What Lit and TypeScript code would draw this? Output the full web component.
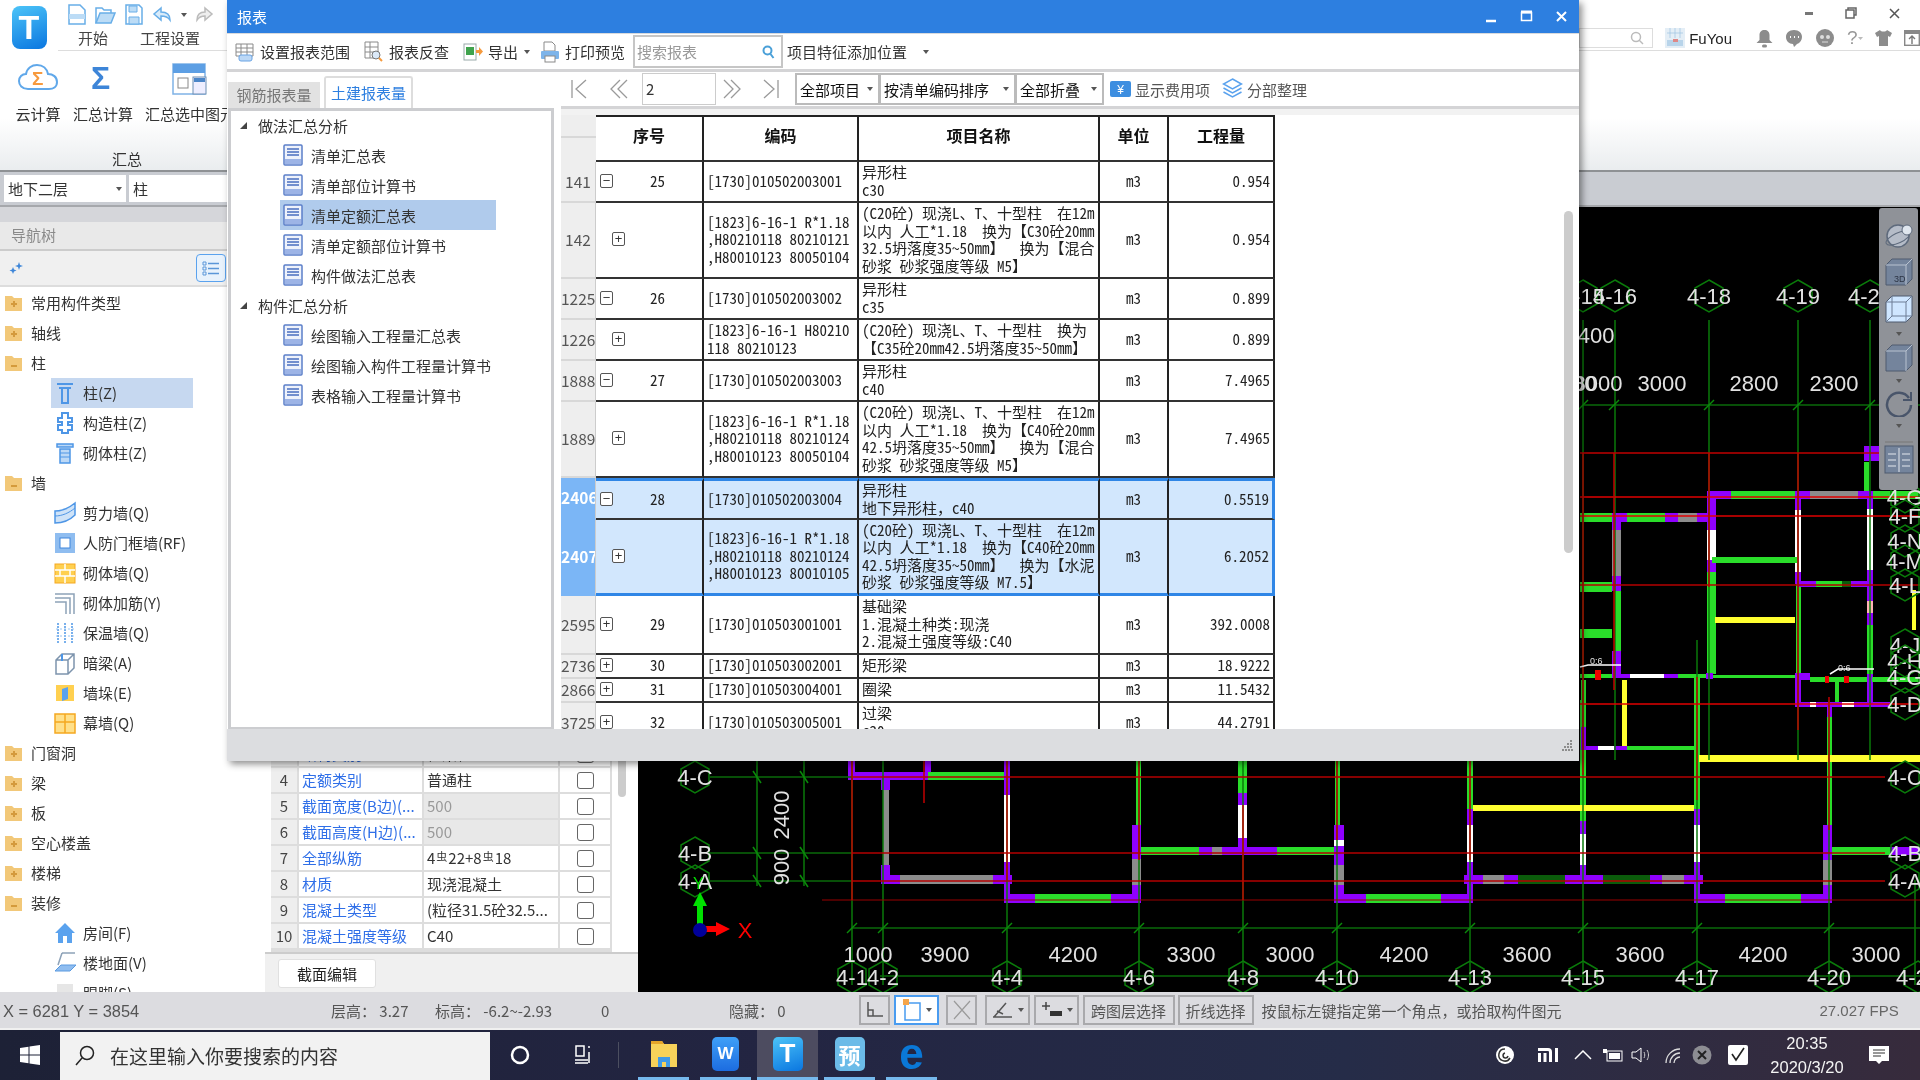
import { LitElement, html, css, svg } from "lit";
import { customElement } from "lit/decorators.js";

// ---- icons -------------------------------------------------------------
const docIcon = html`<svg class="doc" width="20" height="22" viewBox="0 0 20 22">
  <rect x="1" y="1" width="18" height="20" rx="1" fill="#eef2fb" stroke="#5b7fc9" stroke-width="1.5" />
  <rect x="2" y="15" width="16" height="5" fill="#9db4e6" />
  <path d="M4 5h12M4 8h12M4 11h12" stroke="#4a6fc0" stroke-width="1.3" />
</svg>`;

const folder = (open: boolean) => html`<svg width="22" height="20" viewBox="0 0 22 20">
  <path d="M2 3h7l2 2h8v13H2z" fill="#f2c879" />
  ${open ? html`<path d="M1 8h20l-3 10H3z" fill="#f9dca2" />` : ""}
  <path d="${open ? "M8 13h6" : "M8 11h6M11 8v6"}" stroke="#d49a3c" stroke-width="2" />
</svg>`;

const navIcons: Record<string, unknown> = {
  column: html`<svg width="22" height="24" viewBox="0 0 22 24"><path d="M3 3h16M5 7h12M8 7v15h6V7" fill="none" stroke="#4e96e6" stroke-width="2" /></svg>`,
  gz: html`<svg width="22" height="24" viewBox="0 0 22 24"><path d="M8 2h6v5h4v4h-4v3h4v5h-4v3H8v-3H4v-5h4v-3H4V7h4z" fill="#fff" stroke="#4e96e6" stroke-width="2" /></svg>`,
  brick: html`<svg width="22" height="24" viewBox="0 0 22 24"><path d="M3 3h16v3H3zM6 8h10v14H6z" fill="#bcd8f6" stroke="#4e96e6" stroke-width="1.5" /><path d="M6 12h10M6 16h10" stroke="#4e96e6" /></svg>`,
  shear: html`<svg width="22" height="24" viewBox="0 0 22 24"><path d="M1 10c7 0 14-3 20-8v12c-6 6-13 8-20 8z" fill="#cfe3f8" stroke="#4e96e6" stroke-width="1.5" /><path d="M1 15c7 0 14-3 20-8" fill="none" stroke="#4e96e6" /></svg>`,
  frame: html`<svg width="22" height="24" viewBox="0 0 22 24"><rect x="1" y="2" width="20" height="20" fill="#8fbdf0" /><rect x="6" y="7" width="10" height="10" fill="#fff" stroke="#3f86dc" /></svg>`,
  masonry: html`<svg width="22" height="24" viewBox="0 0 22 24"><rect x="1" y="3" width="20" height="19" fill="#ffd050" stroke="#f5a820" /><path d="M1 9h20M1 15h20M11 3v6M6 9v6M16 9v6M11 15v7" stroke="#fff" stroke-width="1.5" /></svg>`,
  rebar: html`<svg width="22" height="24" viewBox="0 0 22 24"><path d="M1 3h19v20M1 7h15v16M1 11h11v12" fill="none" stroke="#8da2b8" stroke-width="1.5" /></svg>`,
  insul: html`<svg width="22" height="24" viewBox="0 0 22 24"><path d="M4 2v20M11 2v20M18 2v20" stroke="#4e96e6" stroke-width="1.5" stroke-dasharray="2 1" /><path d="M2 8h18M2 15h18" stroke="#9cc6f2" stroke-dasharray="2 2" /></svg>`,
  beam: html`<svg width="22" height="24" viewBox="0 0 22 24"><path d="M2 9l6-6h12v14l-6 6H2zM2 9h12v14M14 9l6-6" fill="#fff" stroke="#7d94ad" stroke-width="1.5" /><path d="M8 3v7" stroke="#4e96e6" stroke-width="2" /></svg>`,
  pier: html`<svg width="22" height="24" viewBox="0 0 22 24"><rect x="2" y="4" width="18" height="16" fill="#ffd050" /><path d="M8 8l6-2v12l-6 2z" fill="#5aa2ee" /></svg>`,
  curtain: html`<svg width="22" height="24" viewBox="0 0 22 24"><rect x="1" y="3" width="20" height="19" fill="#ffe08a" stroke="#f5a820" stroke-width="1.5" /><path d="M1 11h20M11 3v19" stroke="#f5a820" stroke-width="1.5" /></svg>`,
  room: html`<svg width="22" height="24" viewBox="0 0 22 24"><path d="M11 2L1 12h3v10h5v-7h4v7h5V12h3z" fill="#5aa2ee" /></svg>`,
  floor: html`<svg width="22" height="24" viewBox="0 0 22 24"><path d="M8 2h13M8 2L4 14" fill="none" stroke="#8da2b8" stroke-width="1.5" /><path d="M1 20l6-6h15l-6 6z" fill="#8fbdf0" stroke="#5a9ae0" /></svg>`,
  skirt: html`<svg width="22" height="24" viewBox="0 0 22 24"><path d="M3 3h16v19H3z" fill="#e6e6e6" /></svg>`,
};

const caret = html`<span class="caret"></span>`;

// ---- data --------------------------------------------------------------
type Nav = { t: string; i: string; sel?: boolean };
const navItems: Nav[] = [
  { t: "常用构件类型", i: "closed" },
  { t: "轴线", i: "closed" },
  { t: "柱", i: "open" },
  { t: "柱(Z)", i: "column", sel: true },
  { t: "构造柱(Z)", i: "gz" },
  { t: "砌体柱(Z)", i: "brick" },
  { t: "墙", i: "open" },
  { t: "剪力墙(Q)", i: "shear" },
  { t: "人防门框墙(RF)", i: "frame" },
  { t: "砌体墙(Q)", i: "masonry" },
  { t: "砌体加筋(Y)", i: "rebar" },
  { t: "保温墙(Q)", i: "insul" },
  { t: "暗梁(A)", i: "beam" },
  { t: "墙垛(E)", i: "pier" },
  { t: "幕墙(Q)", i: "curtain" },
  { t: "门窗洞", i: "closed" },
  { t: "梁", i: "closed" },
  { t: "板", i: "closed" },
  { t: "空心楼盖", i: "closed" },
  { t: "楼梯", i: "closed" },
  { t: "装修", i: "open" },
  { t: "房间(F)", i: "room" },
  { t: "楼地面(V)", i: "floor" },
  { t: "踢脚(S)", i: "skirt" },
];

const propRows = [
  { n: 3, k: "结构类别", v: "框架柱" },
  { n: 4, k: "定额类别", v: "普通柱" },
  { n: 5, k: "截面宽度(B边)(...", v: "500", off: true },
  { n: 6, k: "截面高度(H边)(...", v: "500", off: true },
  { n: 7, k: "全部纵筋", v: "rebar" },
  { n: 8, k: "材质", v: "现浇混凝土" },
  { n: 9, k: "混凝土类型", v: "(粒径31.5砼32.5..." },
  { n: 10, k: "混凝土强度等级", v: "C40" },
];

const reportTree = [
  { t: "做法汇总分析", group: true },
  { t: "清单汇总表" },
  { t: "清单部位计算书" },
  { t: "清单定额汇总表", sel: true },
  { t: "清单定额部位计算书" },
  { t: "构件做法汇总表" },
  { t: "构件汇总分析", group: true },
  { t: "绘图输入工程量汇总表" },
  { t: "绘图输入构件工程量计算书" },
  { t: "表格输入工程量计算书" },
];

type Row = { id: number; h: number; sign: string; seq?: number; code: string; name: string; qty: string; sel?: boolean };
const L1 = "(C20砼) 现浇L、T、十型柱  在12m\n以内 人工*1.18  换为【";
const rows: Row[] = [
  { id: 141, h: 41, sign: "-", seq: 25, code: "[1730]010502003001", name: "异形柱\nc30", qty: "0.954" },
  { id: 142, h: 76, sign: "+", code: "[1823]6-16-1 R*1.18\n,H80210118 80210121\n,H80010123 80050104", name: L1 + "C30砼20mm\n32.5坍落度35~50mm】  换为【混合\n砂浆 砂浆强度等级 M5】", qty: "0.954" },
  { id: 1225, h: 41, sign: "-", seq: 26, code: "[1730]010502003002", name: "异形柱\nc35", qty: "0.899" },
  { id: 1226, h: 41, sign: "+", code: "[1823]6-16-1 H80210\n118 80210123", name: "(C20砼) 现浇L、T、十型柱  换为\n【C35砼20mm42.5坍落度35~50mm】", qty: "0.899" },
  { id: 1888, h: 41, sign: "-", seq: 27, code: "[1730]010502003003", name: "异形柱\nc40", qty: "7.4965" },
  { id: 1889, h: 76, sign: "+", code: "[1823]6-16-1 R*1.18\n,H80210118 80210124\n,H80010123 80050104", name: L1 + "C40砼20mm\n42.5坍落度35~50mm】  换为【混合\n砂浆 砂浆强度等级 M5】", qty: "7.4965" },
  { id: 2406, h: 42, sign: "-", seq: 28, sel: true, code: "[1730]010502003004", name: "异形柱\n地下异形柱\uFF0Cc40", qty: "0.5519" },
  { id: 2407, h: 76, sign: "+", sel: true, code: "[1823]6-16-1 R*1.18\n,H80210118 80210124\n,H80010123 80010105", name: L1 + "C40砼20mm\n42.5坍落度35~50mm】  换为【水泥\n砂浆 砂浆强度等级 M7.5】", qty: "6.2052" },
  { id: 2595, h: 59, sign: "+", seq: 29, code: "[1730]010503001001", name: "基础梁\n1.混凝土种类:现浇\n2.混凝土强度等级:C40", qty: "392.0008" },
  { id: 2736, h: 24, sign: "+", seq: 30, code: "[1730]010503002001", name: "矩形梁", qty: "18.9222" },
  { id: 2866, h: 24, sign: "+", seq: 31, code: "[1730]010503004001", name: "圈梁", qty: "11.5432" },
  { id: 3725, h: 41, sign: "+", seq: 32, code: "[1730]010503005001", name: "过梁\nc20", qty: "44.2791" },
];

// ---- canvas data: [x1, x2, y1, y2, colour] -----------------------------
const G = "#2add2a", P = "#8f00ff", A = "#8c8c8c", W = "#fff", Y = "#ffff30", D = "#0b5c0b", R = "#f00000", K = "#ffb4b4";
type Seg = [number, number, number, number, string];
const walls: Seg[] = [
  // bottom zone, left block
  [848, 928, 772, 780, P], [928, 1007, 772, 780, G], [848, 855, 755, 780, P], [925, 931, 755, 772, P],
  [881, 890, 780, 790, P], [883, 889, 790, 865, A], [881, 890, 865, 884, P], [890, 900, 875, 884, P],
  [900, 993, 875, 884, A], [993, 1012, 875, 884, P], [1004, 1010, 755, 795, P], [1004, 1010, 795, 862, W],
  [1004, 1010, 862, 903, P], [1004, 1035, 894, 903, P], [1035, 1111, 894, 903, G], [1111, 1141, 894, 903, P],
  [1132, 1141, 885, 903, P], [1132, 1141, 859, 885, A], [1132, 1141, 825, 859, P], [1136, 1141, 755, 825, G],
  [1141, 1199, 847, 855, G], [1199, 1212, 847, 855, P], [1212, 1222, 847, 855, A], [1222, 1277, 847, 855, P],
  [1277, 1337, 847, 855, G], [1238, 1247, 755, 793, G], [1238, 1247, 793, 805, P], [1238, 1247, 805, 838, W],
  [1238, 1247, 838, 850, P],
  [1334, 1344, 825, 840, P], [1334, 1344, 840, 846, W], [1334, 1344, 846, 865, P], [1334, 1344, 865, 885, A],
  [1334, 1344, 885, 903, P], [1335, 1340, 755, 825, G], [1334, 1366, 894, 903, P], [1366, 1441, 894, 903, G],
  [1441, 1473, 894, 903, P], [1467, 1473, 880, 900, P], [1467, 1473, 862, 880, P], [1467, 1473, 825, 862, W],
  [1467, 1473, 809, 825, P], [1467, 1473, 755, 809, G], [1464, 1483, 875, 884, P], [1483, 1504, 875, 884, A],
  [1504, 1518, 875, 884, P], [1518, 1565, 875, 884, D], [1565, 1603, 875, 884, P], [1603, 1650, 875, 884, D],
  [1650, 1662, 875, 884, P], [1662, 1684, 875, 884, A], [1684, 1703, 875, 884, P], [1580, 1586, 700, 821, G],
  [1580, 1586, 821, 834, P], [1580, 1586, 834, 865, W], [1580, 1586, 865, 880, P], [1694, 1700, 678, 809, G],
  [1694, 1700, 809, 825, P], [1694, 1700, 825, 862, W], [1694, 1700, 862, 900, P], [1694, 1725, 894, 903, P],
  [1725, 1801, 894, 903, G], [1801, 1832, 894, 903, P], [1827, 1832, 717, 825, G], [1823, 1832, 825, 860, P],
  [1823, 1832, 860, 885, A], [1823, 1832, 885, 900, P], [1832, 1890, 847, 855, G], [1890, 1920, 847, 855, P],
  [1473, 1694, 805, 811, Y], [1699, 1920, 755, 762, Y],
  // top right zone
  [1580, 1612, 513, 522, G], [1612, 1627, 513, 522, P], [1627, 1665, 513, 522, G], [1665, 1678, 513, 522, P],
  [1678, 1697, 513, 522, A], [1697, 1707, 513, 522, P], [1612, 1621, 522, 530, P], [1612, 1621, 530, 576, A],
  [1612, 1621, 576, 591, P], [1615, 1621, 591, 651, G], [1612, 1621, 651, 678, P],
  [1707, 1716, 491, 530, P], [1707, 1716, 530, 560, W], [1707, 1716, 560, 572, P], [1707, 1716, 572, 674, G],
  [1707, 1731, 491, 499, P], [1731, 1795, 491, 499, G], [1795, 1810, 491, 499, P], [1810, 1858, 491, 499, A],
  [1858, 1873, 491, 499, P], [1795, 1801, 495, 510, P], [1795, 1801, 510, 572, W], [1795, 1801, 572, 584, P],
  [1796, 1801, 584, 674, G], [1867, 1873, 495, 509, P], [1867, 1873, 509, 570, W], [1867, 1873, 570, 601, P],
  [1867, 1873, 601, 613, K], [1867, 1873, 613, 625, P], [1867, 1873, 625, 674, G], [1867, 1873, 674, 705, P],
  [1797, 1816, 581, 587, P], [1816, 1842, 581, 587, G], [1842, 1851, 581, 587, D], [1851, 1870, 581, 587, P],
  [1864, 1869, 462, 491, G], [1864, 1879, 446, 461, P], [1873, 1920, 491, 499, G],
  [1580, 1612, 582, 592, G], [1580, 1612, 629, 638, G], [1712, 1797, 557, 563, G], [1715, 1795, 617, 623, Y],
  [1912, 1916, 590, 630, Y], [1580, 1612, 674, 678, G], [1595, 1601, 670, 680, R], [1612, 1630, 674, 678, P],
  [1630, 1664, 674, 678, W], [1664, 1678, 674, 678, P], [1678, 1706, 674, 678, G], [1706, 1713, 673, 679, P],
  [1713, 1795, 675, 678, G], [1795, 1810, 673, 680, P], [1810, 1920, 677, 682, G], [1825, 1829, 676, 683, R],
  [1844, 1849, 676, 683, R], [1867, 1872, 674, 705, P], [1795, 1810, 702, 707, P], [1810, 1816, 702, 707, W],
  [1816, 1842, 702, 707, P], [1842, 1854, 702, 707, W], [1854, 1890, 702, 707, P], [1622, 1627, 680, 746, Y],
  [1581, 1586, 680, 727, G], [1581, 1586, 727, 750, P], [1583, 1598, 746, 750, P], [1598, 1614, 746, 750, W],
  [1614, 1627, 746, 750, P], [1627, 1694, 746, 750, G], [1827, 1832, 707, 717, P], [1835, 1839, 682, 702, G],
  [1795, 1801, 673, 704, P],
];

// green vertical axes [x, y1, y2]
const greenV = [
  [852, 760, 985], [883, 760, 985], [1007, 760, 985], [1139, 760, 985], [1243, 760, 985], [1337, 760, 985],
  [1470, 760, 985], [1583, 320, 985], [1615, 320, 760], [1709, 320, 760], [1798, 320, 760], [1870, 320, 760],
  [1697, 640, 985], [1829, 700, 985], [1915, 880, 985], [757, 760, 886], [804, 760, 886],
];
// horizontal axes, [x1, x2, y, colour, width]
const axisH: [number, number, number, string, number][] = [
  [710, 852, 777, "#0a6a0a", 1.5], [710, 852, 853, "#0a6a0a", 1.5], [710, 852, 881, "#0a6a0a", 1.5],
  [852, 1920, 928, "#0a6a0a", 1.5], [880, 1920, 976, "#0a6a0a", 1.5], [1583, 1920, 405, "#0a6a0a", 1.5],
  [852, 1885, 777, "#b40000", 1.5], [852, 1885, 853, "#b40000", 1.5], [852, 1885, 881, "#b40000", 1.5],
  [822, 1920, 900, "#9a0000", 1], [1580, 1880, 453, "#c00000", 1.5], [1580, 1920, 497, "#e00000", 1.5],
  [1580, 1920, 516, "#e00000", 1.5], [1580, 1920, 585, "#b40000", 1.5], [1580, 1920, 704, "#e00000", 1.5],
];
const redV = [
  [852, 760, 900], [924, 760, 803], [1243, 805, 900], [1583, 453, 775], [1614, 453, 690], [1709, 453, 587],
  [1798, 453, 730], [1829, 697, 830], [1697, 677, 800], [1007, 760, 880], [1139, 760, 860], [1470, 760, 860],
  [1337, 760, 840],
];
const bubbles: [string, number, number][] = [
  ["4-15", 1583, 296], ["4-16", 1615, 296], ["4-18", 1709, 296], ["4-19", 1798, 296], ["4-20", 1870, 296],
  ["4-C", 695, 777], ["4-B", 695, 853], ["4-A", 695, 881],
  ["4-1", 852, 977], ["4-2", 883, 977], ["4-4", 1007, 977], ["4-6", 1139, 977], ["4-8", 1243, 977],
  ["4-10", 1337, 977], ["4-13", 1470, 977], ["4-15", 1583, 977], ["4-17", 1697, 977], ["4-20", 1829, 977],
  ["4-22", 1918, 977], ["4-C", 1905, 777], ["4-B", 1905, 853], ["4-A", 1905, 881], ["4-G", 1905, 497],
  ["4-F", 1905, 516], ["4-N", 1905, 541], ["4-M", 1905, 561], ["4-L", 1905, 585], ["4-J", 1905, 645],
  ["4-H", 1905, 661], ["4-G", 1905, 677], ["4-D", 1905, 704],
];
const dims: [string, number, number][] = [
  ["2400", 1590, 343], ["1000", 1572, 391], ["3000", 1598, 391], ["3000", 1662, 391], ["2800", 1754, 391],
  ["2300", 1834, 391], ["1000", 868, 962], ["3900", 945, 962], ["4200", 1073, 962], ["3300", 1191, 962],
  ["3000", 1290, 962], ["4200", 1404, 962], ["3600", 1527, 962], ["3600", 1640, 962], ["4200", 1763, 962],
  ["3000", 1876, 962],
];
const hexPts = "0,-16 14,-8 14,8 0,16 -14,8 -14,-8";

@customElement("app-root")
export class AppRoot extends LitElement {
  static styles = css`
    :host {
      display: block;
      position: relative;
      width: 1920px;
      height: 1080px;
      overflow: hidden;
      font-family: "Noto Sans CJK SC", "Liberation Sans", sans-serif;
      font-size: 15px;
      color: #333;
      background: #fff;
      filter: blur(0.5px);
    }
    svg { display: block; flex: none; }
    .caret {
      display: inline-block;
      width: 0;
      height: 0;
      border: 3.5px solid transparent;
      border-top: 4px solid #555;
      border-bottom: 0;
      flex: none;
    }

    /* ribbon */
    .ribbon {
      height: 172px;
      box-sizing: border-box;
      border-bottom: 2px solid #8e9194;
      background: linear-gradient(#fff 0, #fff 118px, #e9ecee 172px);
      overflow: hidden;
    }
    .rtop { display: flex; height: 51px; }
    .logo-box {
      width: 58px;
      display: flex;
      align-items: center;
      justify-content: center;
      padding-left: 0;
    }
    .logo {
      width: 35px;
      height: 43px;
      margin-top: 4px;
      border-radius: 8px;
      background: linear-gradient(160deg, #4cc4f8, #0a76e0);
      color: #fff;
      font: bold 34px/43px "Liberation Sans", sans-serif;
      text-align: center;
    }
    .rtop-mid { flex: 1; border-bottom: 1px solid #ddd; display: flex; flex-direction: column; }
    .qat { display: flex; gap: 9px; align-items: center; height: 29px; padding-left: 10px; }
    .rtabs { display: flex; gap: 32px; padding-left: 20px; font-size: 15px; line-height: 18px; color: #444; }
    .rright { width: 341px; border-bottom: 1px solid #ddd; display: flex; flex-direction: column; }
    .winbtns { display: flex; height: 26px; align-items: center; color: #555; padding-left: 226px; gap: 32px; }
    .ruser { display: flex; align-items: center; height: 24px; }
    .rsearch {
      width: 78px;
      height: 20px;
      border: 1px solid #ddd;
      box-sizing: border-box;
      display: flex;
      justify-content: flex-end;
      align-items: center;
      padding-right: 8px;
    }
    .rname { font: 15px "Liberation Sans", sans-serif; color: #222; margin: 0 24px 0 4px; }
    .ruser svg.ava { margin-left: 12px; }
    .ricons { display: flex; gap: 12px; align-items: center; }
    .rbig { display: flex; height: 62px; padding-top: 12px; }
    .rbig-item { display: flex; flex-direction: column; align-items: center; height: 61px; justify-content: space-between; white-space: nowrap; }
    .rbig-1 { width: 76px; }
    .rbig-2 { width: 54px; }
    .rbig-3 { width: 120px; }
    .rgroup { width: 254px; text-align: center; margin-top: 24px; line-height: 20px; }

    /* combo band */
    .band {
      height: 35px;
      box-sizing: border-box;
      background: #c9ccd2;
      display: flex;
      gap: 3px;
      padding: 3px 0 0 4px;
      border-bottom: 2px solid #a6a8ac;
    }
    .combo {
      height: 27px;
      background: #fff;
      box-sizing: border-box;
      padding: 0 4px;
      display: flex;
      align-items: center;
      justify-content: space-between;
      line-height: 27px;
    }
    .combo-a { width: 122px; }
    .combo-b { width: 130px; }

    /* workspace */
    .work { display: flex; height: 785px; }
    .side { width: 265px; flex: none; overflow: hidden; display: flex; flex-direction: column; background: #fff; }
    .side-gap { height: 15px; background: #d5d6da; flex: none; }
    .side-head {
      height: 27px;
      background: #e9e9e9;
      border-bottom: 2px solid #ccc;
      color: #8a8a8a;
      padding-left: 11px;
      line-height: 25px;
      flex: none;
    }
    .side-tools {
      height: 34px;
      background: #f0f0f0;
      border-bottom: 2px solid #ddd;
      display: flex;
      align-items: center;
      justify-content: space-between;
      padding: 0 39px 0 9px;
      flex: none;
    }
    .listbtn {
      width: 28px;
      height: 26px;
      border: 1px solid #5aa2ee;
      border-radius: 4px;
      background: #e8f2fc;
      display: flex;
      align-items: center;
      justify-content: center;
    }
    .nav { flex: 1; padding-top: 1px; overflow: hidden; }
    .nrow { height: 30px; display: flex; align-items: center; gap: 6px; padding-left: 3px; line-height: 30px; white-space: nowrap; }
    .nrow.child { padding-left: 54px; gap: 7px; }
    .nrow.nsel { background: linear-gradient(90deg, transparent 51px, #c6d8f0 51px, #c6d8f0 193px, transparent 193px); }

    /* properties */
    .props { width: 373px; flex: none; display: flex; flex-direction: column; justify-content: flex-end; background: #f0f0f0; overflow: hidden; }
    .pbody { display: flex; background: #fff; border-bottom: 2px solid #ccc; padding-left: 6px; height: 212px; box-sizing: border-box; overflow: hidden; }
    .ptable {
      width: 341px;
      flex: none;
      display: grid;
      grid-template-columns: 28px 125px 136px 52px;
      grid-auto-rows: 26px;
      background: #ddd;
      align-content: start;
    }
    .pc { background: #fff; border: 1px solid #ddd; border-width: 0 2px 2px 0; box-sizing: border-box; padding-left: 3px; line-height: 24px; white-space: nowrap; overflow: hidden; }
    .pn { background: #eee; text-align: center; padding: 0; color: #444; }
    .pk { color: #2f6fe8; }
    .pv.off { background: #e8e8e8; color: #999; }
    .rebar-s { font-size: 11px; position: relative; top: -3px; padding: 0 1px; }
    .pchk { display: flex; align-items: center; justify-content: center; padding: 0; }
    .pchk i { display: block; width: 17px; height: 17px; border: 1px solid #666; border-radius: 3px; box-sizing: border-box; background: #fff; }
    .pscroll { width: 8px; height: 55px; margin-left: 6px; background: #ccc; border-radius: 4px; }
    .pfoot { height: 38px; flex: none; padding: 5px 0 0 13px; box-sizing: border-box; }
    .pbtn {
      width: 98px;
      height: 29px;
      background: #fff;
      border: 1px solid #e0e0e0;
      border-radius: 3px;
      text-align: center;
      line-height: 27px;
      box-sizing: border-box;
      color: #222;
    }

    /* canvas */
    .view { position: relative; flex: 1; background: #000; overflow: hidden; }
    .view text { font-family: "Liberation Sans", sans-serif; fill: #e2e2e2; }
    .strip {
      position: absolute;
      left: 1241px;
      top: 1px;
      width: 39px;
      height: 282px;
      background: #8f9298;
      border-radius: 3px;
      display: flex;
      flex-direction: column;
      align-items: center;
      padding-top: 13px;
      box-sizing: border-box;
    }
    .m6 { margin-top: 6px; }
    .m7 { margin-top: 7px; }
    .m8 { margin-top: 8px; }
    .m12 { margin-top: 12px; }

    /* status */
    .status {
      height: 36px;
      background: #dcdce0;
      display: grid;
      grid-template-columns: 331px 104px 166px 128px 130px 35px 52px 39px 49px 48.5px 95px 84px 558px 1fr;
      align-items: center;
      padding: 0;
      color: #555;
      white-space: pre;
      border-bottom: 2px solid #f0f0f0;
      box-sizing: content-box;
    }
    .sfirst { padding: 3px 0 0 3px; font: 16.4px "Liberation Sans", "Noto Sans CJK SC", sans-serif; }
    .sbtn {
      height: 30px;
      border: 2px solid #a9a9ac;
      box-sizing: border-box;
      display: flex;
      align-items: center;
      justify-content: center;
      gap: 4px;
      background: #dcdce0;
    }
    .sbtn.on { background: #fff; border: 2px solid #4a9cf0; }
    .sw31 { width: 31px; }
    .sw45 { width: 45px; }
    .sw92 { width: 92px; }
    .sw76 { width: 76px; }
    .sfps { font: 15px "Liberation Sans", sans-serif; color: #666; }

    /* taskbar */
    .task {
      height: 50px;
      background: linear-gradient(90deg, #1d2136 0, #232542 40%, #252c48 70%, #372b3c 100%);
      display: grid;
      grid-template-columns: 60px 430px 60px 70px 1fr;
      align-items: center;
      color: #fff;
      position: relative;
    }
    .tstart { display: flex; justify-content: center; }
    .tsearch {
      background: #f2f2f2;
      height: 48px;
      margin-top: 1px;
      display: flex;
      align-items: center;
      color: #333;
      font-size: 19px;
      gap: 15px;
      padding-left: 15px;
    }
    .tcirc { display: flex; justify-content: center; padding-left: 0; }
    .tview { display: flex; justify-content: center; border-right: 1px solid #4c4f60; height: 26px; align-items: center; margin-right: 0; width: 68px; }
    .tright { display: flex; align-items: center; height: 50px; }
    .tapps { display: flex; height: 50px; padding-left: 18px; gap: 11px; }
    .tapp { width: 51px; height: 50px; box-sizing: border-box; border-bottom: 3px solid #76b9ed; display: flex; align-items: center; justify-content: center; }
    .tapp.active { width: 61px; margin: 0 -5px; background: #4d4c60; }
    .tbadge {
      width: 30px;
      height: 34px;
      border-radius: 5px;
      display: flex;
      align-items: center;
      justify-content: center;
      font: bold 22px "Noto Sans CJK SC", sans-serif;
      color: #fff;
    }
    .b-w { background: linear-gradient(#3fa0f8, #1c6ce0); width: 27px; font: bold 17px "Liberation Sans", sans-serif; }
    .b-t { background: linear-gradient(160deg, #4cc4f8, #0a76e0); font-family: "Liberation Sans", sans-serif; font-size: 26px; }
    .b-y { background: #6bbbe8; font-size: 22px; }
    .b-e { background: none; color: #0a78d7; font: bold 44px/34px "Liberation Sans", sans-serif; }
    .tray { margin-left: auto; display: grid; grid-template-columns: 44px 42px 28px 32px 24px 42px 14px 58px 80px 64px; align-items: center; justify-items: center; height: 50px; padding-right: 9px; }
    .clock { text-align: center; font-size: 16.5px; line-height: 24px; white-space: nowrap; color: #f4f4f4; font-family: "Liberation Sans", sans-serif; }

    /* report dialog */
    .dlg {
      position: absolute;
      left: 227px;
      top: 0;
      width: 1352px;
      height: 761px;
      background: #fff;
      box-shadow: 3px 3px 7px rgba(0, 0, 0, 0.45);
      display: flex;
      flex-direction: column;
    }
    .dtitle {
      height: 33px;
      background: #2d7fe0;
      flex: none;
      color: #fff;
      display: flex;
      align-items: center;
      padding-left: 10px;
      line-height: 33px;
    }
    .dctl { margin-left: auto; display: flex; gap: 20px; padding-right: 10px; }
    .dbar {
      height: 39px;
      flex: none;
      box-sizing: border-box;
      border-bottom: 3px solid #d4d4d6;
      border-top: 1px solid #d8dadd;
      display: flex;
      align-items: center;
      gap: 14px;
      padding-left: 8px;
      white-space: nowrap;
      color: #333;
    }
    .tool { display: flex; align-items: center; gap: 5px; }
    .tool.cut { margin-right: -4px; }
    .tool.cut .caret { margin-left: 1px; }
    .dsearch {
      width: 150px;
      height: 33px;
      box-sizing: border-box;
      border: 2px solid #c6c6c6;
      margin-left: -6px;
      display: flex;
      align-items: center;
      justify-content: space-between;
      padding: 0 6px 0 2px;
      color: #999;
    }
    .dprop { margin-left: -10px; gap: 0; }
    .dprop .caret { margin-left: 16px; }
    .dbody { flex: 1; display: flex; min-height: 0; }
    .dleft { width: 334px; flex: none; display: flex; flex-direction: column; }
    .tabs { height: 34px; flex: none; display: flex; align-items: flex-end; padding-left: 1px; gap: 4px; margin-top: 2px; }
    .tab { width: 92px; height: 26px; background: #e2e2e2; color: #777; text-align: center; line-height: 26px; }
    .tab.on { width: 89px; height: 32px; line-height: 30px; background: #fff; color: #2d7fe0; border: 2px solid #ddd; border-bottom: 0; box-sizing: border-box; border-radius: 3px 3px 0 0; }
    .tree {
      flex: 1;
      width: 326px;
      margin-left: 1px;
      background: #fff;
      border: 3px solid #cccdd0;
      border-bottom-width: 2px;
      box-sizing: border-box;
      overflow: hidden;
    }
    .tree-rows { margin-top: -1px; }
    .trow { height: 30px; display: flex; align-items: center; white-space: nowrap; }
    .trow.group { padding-left: 9px; gap: 11px; }
    .tri { width: 0; height: 0; border-left: 7px solid transparent; border-bottom: 7px solid #444; }
    .titem { margin-left: 49px; width: 216px; height: 30px; display: flex; align-items: center; gap: 8px; padding-left: 3px; box-sizing: border-box; }
    .titem.sel { background: #b0cbec; }
    .dright { flex: 1; min-width: 0; display: flex; flex-direction: column; }
    .nbar {
      height: 37px;
      flex: none;
      box-sizing: border-box;
      border-bottom: 3px solid #d4d4d6;
      display: flex;
      align-items: center;
      color: #333;
      white-space: nowrap;
    }
    .npg { width: 18px; height: 22px; margin-left: 9px; color: #9a9a9a; }
    .npg svg { width: 18px; height: 22px; }
    .npg.two { margin-left: 22px; }
    .npg.three { margin-left: 7px; }
    .npg.four { margin-left: 21px; }
    .ninput { width: 74px; height: 32px; box-sizing: border-box; border: 1px solid #ccc; margin-left: 14px; line-height: 30px; padding-left: 3px; }
    .ncombo { height: 32px; box-sizing: border-box; border: 2px solid #bbb; display: flex; align-items: center; justify-content: space-between; padding: 0 5px 0 3px; color: #111; }
    .nc1 { width: 85px; margin-left: 15px; }
    .nc2 { width: 137px; margin-left: -1px; }
    .nc3 { width: 89px; margin-left: -1px; }
    .nplain { color: #555; display: flex; align-items: center; gap: 4px; }
    .np1 { margin-left: 6px; }
    .np2 { margin-left: 12px; }

    .gridwrap { flex: 1; min-height: 0; overflow: hidden; position: relative; border-top: 6px solid #f2f2f2; }
    table { border-collapse: separate; border-spacing: 0; table-layout: fixed; width: 714px; font-family: "Noto Sans Mono CJK SC", "Noto Sans CJK SC", monospace; font-size: 15px; color: #222; }
    td, th { box-sizing: border-box; padding: 0 0 2px; border-right: 2px solid #222; border-bottom: 2px solid #333; white-space: pre; line-height: 17.5px; vertical-align: middle; overflow: hidden; }
    th { height: 47px; border-top: 2px solid #222; padding-bottom: 8px; font: bold 16px "Noto Sans CJK SC", sans-serif; text-align: center; color: #111; }
    th.rn-h { background: #eee; border: 0; padding: 0; vertical-align: top; }
    .rn-h div { height: 23px; border-bottom: 2px solid #d8d8d8; box-sizing: border-box; }
    .rn-h div + div { height: 24px; border-bottom: 0; }
    td.rn { background: #eee; border-right: 1px solid #ccc; border-bottom: 2px solid #d8d8d8; text-align: center; font: 15.5px/20px "Noto Sans CJK SC", sans-serif; color: #555; }
    tr.sel td { background: #d2e7fd; }
    tr.sel td.rn { background: #7bb6f6; color: #fff; font-weight: bold; border-bottom-color: #7bb6f6; }
    tr.first td:not(.rn) { border-top: 3px solid #2f86e6; }
    tr.last td:not(.rn) { border-bottom: 3px solid #2f86e6; }
    tr.sel td:last-child { border-right: 3px solid #2f86e6; }
    .seq { display: flex; align-items: center; }
    .box {
      width: 13px;
      height: 14px;
      flex: none;
      border: 1px solid #555;
      border-radius: 2px;
      background: #fff;
      box-sizing: border-box;
      margin-left: 4px;
      font: 13px/11px "Liberation Sans", sans-serif;
      text-align: center;
      color: #333;
    }
    .box.sub { margin-left: 16px; }
    .seq b { flex: 1; text-align: center; font-weight: normal; }
    td.code { padding-left: 3px; }
    td.nm { padding-left: 3px; }
    td.unit { text-align: center; }
    td.qty { text-align: right; padding-right: 3px; }
    .dscroll { position: absolute; left: 1003px; top: 96px; width: 9px; height: 342px; background: #ccc; border-radius: 5px; }
    .dfoot { height: 32px; flex: none; background: #dcdde0; display: flex; justify-content: flex-end; align-items: center; padding-right: 6px; }
  `;

  private renderRibbon() {
    return html`<div class="ribbon">
      <div class="rtop">
        <div class="logo-box"><div class="logo">T</div></div>
        <div class="rtop-mid">
          <div class="qat">
            <svg width="18" height="21" viewBox="0 0 18 21"><path d="M1 1h11l5 5v14H1z" fill="#fff" stroke="#68aee8" stroke-width="1.5" /><path d="M1 10h16v5H1z" fill="#bcdcf6" /></svg>
            <svg width="21" height="19" viewBox="0 0 21 19"><path d="M1 18V3h6l2 2h7v3" fill="none" stroke="#68aee8" stroke-width="1.5" /><path d="M1 18l4-10h15l-4 10z" fill="#bcdcf6" stroke="#68aee8" stroke-width="1.5" /></svg>
            <svg width="18" height="21" viewBox="0 0 18 21"><path d="M1 1h13l3 3v16H1z" fill="#fff" stroke="#68aee8" stroke-width="1.5" /><path d="M4 2h8v6H4zM4 13h10v7H4z" fill="#bcdcf6" stroke="#68aee8" /></svg>
            <svg width="20" height="17" viewBox="0 0 20 17"><path d="M9 2L2 8l7 6v-4c4 0 7 1 9 4 0-5-3-8-9-8z" fill="#d8ebfa" stroke="#68aee8" stroke-width="1.5" /></svg>
            <span class="caret"></span>
            <svg width="18" height="17" viewBox="0 0 18 17"><path d="M9 2l7 6-7 6v-4c-3 0-6 1-8 4 0-5 3-8 8-8z" fill="#eee" stroke="#bbb" stroke-width="1.5" /></svg>
          </div>
          <div class="rtabs"><span>开始</span><span>工程设置</span></div>
        </div>
        <div class="rright">
          <div class="winbtns">
            <svg width="8" height="3" viewBox="0 0 8 3"><rect width="8" height="3" fill="#777" /></svg>
            <svg width="12" height="12" viewBox="0 0 12 12"><path d="M3 3V1h8v7H9M1 3h8v8H1z" fill="none" stroke="#666" stroke-width="1.5" /></svg>
            <svg width="11" height="11" viewBox="0 0 11 11"><path d="M1 1l9 9M10 1l-9 9" stroke="#555" stroke-width="1.5" /></svg>
          </div>
          <div class="ruser">
            <div class="rsearch"><svg width="14" height="14" viewBox="0 0 14 14"><circle cx="6" cy="6" r="4.5" fill="none" stroke="#bbb" stroke-width="1.5" /><path d="M9 9l4 4" stroke="#bbb" stroke-width="1.5" /></svg></div>
            <svg class="ava" width="20" height="20" viewBox="0 0 20 20"><rect width="20" height="20" fill="#e4eef6" /><path d="M2 5h16M5 0v10M10 0v10M15 0v10" stroke="#9ec3e2" stroke-width=".7" /><rect x="2" y="12" width="16" height="6" fill="#b8d4ea" /><rect x="8" y="11" width="5" height="3" fill="#d88" /></svg>
            <span class="rname">FuYou</span>
            <div class="ricons">
              <svg width="17" height="19" viewBox="0 0 17 19"><path d="M8.500 1c-3 0-5 2-5 5v5l-3 3h16l-3-3V6c0-3-2-5-5-5z" fill="#8c8c8c" /><rect x="6" y="15.500" width="5" height="3" rx="1.500" fill="#8c8c8c" /></svg>
              <svg width="18" height="18" viewBox="0 0 18 18"><path d="M9 1c-5 0-8 3-8 7s3 7 7 7l1 3 3-3c3-1 5-4 5-7 0-4-3-7-8-7z" fill="#8c8c8c" /><path d="M5 8h1M9 8h1M13 8h1" stroke="#fff" stroke-width="2" /></svg>
              <svg width="20" height="22" viewBox="0 0 20 22"><circle cx="10" cy="11" r="9" fill="#8c8c8c" /><circle cx="7" cy="10" r="2" fill="#ddd" /><circle cx="13" cy="10" r="2" fill="#ddd" /><path d="M7 15h6" stroke="#ddd" /></svg>
              <svg width="16" height="20" viewBox="0 0 16 20"><text x="0" y="16" font-size="19" font-family="Liberation Sans" fill="#999">?</text><path d="M11 9h5l-2.500 3z" fill="#bbb" /></svg>
              <svg width="17" height="16" viewBox="0 0 17 16"><path d="M5 0L0 3l2 4 2-1v10h9V6l2 1 2-4-5-3c-1 2-6 2-7 0z" fill="#8c8c8c" /></svg>
              <svg width="16" height="16" viewBox="0 0 16 16"><rect x=".7" y=".7" width="14.600" height="14.600" fill="#fff" stroke="#888" stroke-width="1.400" /><rect x="1" y="1" width="14" height="3" fill="#888" /><path d="M8 14V7M5 9l3-3 3 3" stroke="#777" fill="none" stroke-width="1.400" /></svg>
            </div>
          </div>
        </div>
      </div>
      <div class="rbig">
        <div class="rbig-item rbig-1">
          <svg width="40" height="28" viewBox="0 0 40 28"><path d="M10 26C4 26 1 22 1 18s3-7 7-7c1-6 6-9 11-9 6 0 10 4 11 9 5 0 9 3 9 8s-4 7-8 7z" fill="#fff" stroke="#60a8ea" stroke-width="2" /><text x="14" y="22" font-size="19" font-weight="bold" font-family="Liberation Sans" fill="#f79a3e">Σ</text></svg>
          <span>云计算</span>
        </div>
        <div class="rbig-item rbig-2">
          <svg width="26" height="28" viewBox="0 0 26 28"><text x="1" y="26" font-size="32" font-weight="bold" font-family="Liberation Sans" fill="#3d85d8">Σ</text></svg>
          <span>汇总计算</span>
        </div>
        <div class="rbig-item rbig-3">
          <svg width="36" height="32" viewBox="0 0 36 32"><rect x="1" y="1" width="32" height="30" fill="#fff" stroke="#7fb2e6" stroke-width="1.5" /><rect x="1" y="1" width="32" height="9" fill="#5d9fe4" /><rect x="6" y="15" width="10" height="10" fill="#fff" stroke="#888" /><rect x="21" y="14" width="13" height="17" fill="#eef" stroke="#6d8fb4" /><rect x="22" y="15" width="11" height="4" fill="#4b86c8" /></svg>
          <span>汇总选中图元</span>
        </div>
      </div>
      <div class="rgroup">汇总</div>
    </div>`;
  }

  private renderSide() {
    return html`<div class="side">
      <div class="side-gap"></div>
      <div class="side-head">导航树</div>
      <div class="side-tools">
        <svg width="16" height="14" viewBox="0 0 16 14"><path d="M10 1l1 3 3 1-3 1-1 3-1-3-3-1 3-1zM4 6l1 2.500 2.500 1L5 10.500 4 13l-1-2.500-2.500-1L3 8.500z" fill="#3d85d8" /></svg>
        <div class="listbtn"><svg width="18" height="16" viewBox="0 0 18 16"><path d="M1 2h3v3H1zM1 7h3v3H1zM1 12h3v3H1z" fill="none" stroke="#5a96d8" /><path d="M6 3.500h11M6 8.500h11M6 13.500h11" stroke="#5a96d8" stroke-width="1.300" /></svg></div>
      </div>
      <div class="nav">
        ${navItems.map((n) => {
          const top = n.i === "open" || n.i === "closed";
          return html`<div class="nrow ${top ? "" : "child"} ${n.sel ? "nsel" : ""}">
            ${top ? folder(n.i === "open") : navIcons[n.i]}<span>${n.t}</span>
          </div>`;
        })}
      </div>
    </div>`;
  }

  private renderProps() {
    return html`<div class="props">
      <div class="pbody">
        <div class="ptable">
          ${propRows.map(
            (r) => html`<div class="pc pn">${r.n}</div>
              <div class="pc pk">${r.k}</div>
              <div class="pc pv ${r.off ? "off" : ""}">
                ${r.v === "rebar"
                  ? html`4<span class="rebar-s">虫</span>22+8<span class="rebar-s">虫</span>18`
                  : r.v}
              </div>
              <div class="pc pchk"><i></i></div>`
          )}
        </div>
        <div class="pscroll"></div>
      </div>
      <div class="pfoot"><div class="pbtn">截面编辑</div></div>
    </div>`;
  }

  private renderCanvas() {
    return html`<div class="view">
      <svg width="1282" height="785" viewBox="638 207 1282 785">
        ${walls.map(([x1, x2, y1, y2, c]) => svg`<rect x=${x1} y=${y1} width=${x2 - x1} height=${y2 - y1} fill=${c} />`)}
        ${greenV.map(([x, a, b]) => svg`<line x1=${x} x2=${x} y1=${a} y2=${b} stroke="#0a7a0a" stroke-width="1.500" />`)}
        ${axisH.map(([a, b, y, c, w]) => svg`<line x1=${a} x2=${b} y1=${y} y2=${y} stroke=${c} stroke-width=${w} />`)}
        ${redV.map(([x, a, b]) => svg`<line x1=${x} x2=${x} y1=${a} y2=${b} stroke="#c00000" stroke-width="1.500" />`)}
        ${[1583, 1614, 1709, 1798, 1870].map((x) => svg`<line x1=${x - 5} x2=${x + 5} y1=${410} y2=${400} stroke="#0a8a0a" stroke-width="1.500" />`)}
        ${[852, 883, 1007, 1139, 1243, 1337, 1470, 1583, 1697, 1829].map((x) => svg`<line x1=${x - 5} x2=${x + 5} y1=${933} y2=${923} stroke="#0a8a0a" stroke-width="1.500" />`)}
        ${[[757, 777], [804, 777], [757, 853], [804, 853], [757, 881], [804, 881]].map(([x, y]) => svg`<line x1=${x - 4} x2=${x + 4} y1=${y - 6} y2=${y + 6} stroke="#0a8a0a" stroke-width="1.500" />`)}
        ${bubbles.map(([t, x, y]) => svg`<g transform="translate(${x} ${y})">
          <polygon points=${hexPts} fill="none" stroke="#0a7a0a" stroke-width="1.500" />
          <text x="0" y="8" text-anchor="middle" font-size="22">${t}</text>
        </g>`)}
        ${dims.map(([t, x, y]) => svg`<text x=${x} y=${y} text-anchor="middle" font-size="22">${t}</text>`)}
        <text transform="translate(789 867) rotate(-90)" text-anchor="middle" font-size="22">900</text>
        <text transform="translate(789 815) rotate(-90)" text-anchor="middle" font-size="22">2400</text>
        <text x="1590" y="664" font-size="9">0:6</text>
        <text x="1838" y="671" font-size="9">0:6</text>
        <path d="M1580 667l8-2h33M1830 674l8-5h36" fill="none" stroke="#fff" stroke-width="1.500" />
        <rect x="697" y="900" width="6" height="30" fill="#00e000" />
        <path d="M700 892l-7 14h14z" fill="#00e000" />
        <text x="693" y="889" font-size="16" style="fill:#00e000">Y</text>
        <rect x="700" y="926" width="18" height="6" fill="#f00" />
        <path d="M716 922l14 7-14 7z" fill="#f00" />
        <ellipse cx="700" cy="930" rx="7" ry="7" fill="#00009a" />
        <text x="745" y="938" text-anchor="middle" font-size="22" style="fill:#f00">X</text>
      </svg>
      <div class="strip">
        <svg width="30" height="30" viewBox="0 0 30 30"><circle cx="14" cy="15" r="11" fill="#b5bcc8" stroke="#5e6a7c" stroke-width="1.500" /><ellipse cx="14" cy="17" rx="13" ry="5" fill="none" stroke="#5e6a7c" transform="rotate(-25 14 17)" /><circle cx="23" cy="9" r="5" fill="#dfe6ee" stroke="#5e6a7c" /></svg>
        <svg class="m6" width="30" height="30" viewBox="0 0 30 30"><path d="M2 8l6-6h20v20l-6 6H2z" fill="#74849c" stroke="#4e5a6e" /><path d="M2 8h20v20M22 8l6-6" fill="none" stroke="#b8c2d0" /><text x="10" y="25" font-size="9" font-family="Liberation Sans" style="fill:#2c3444">3D</text></svg>
        <svg class="m7" width="30" height="30" viewBox="0 0 30 30"><path d="M2 8l6-6h20v20l-6 6H2z" fill="#cfe6ff" stroke="#4e5a6e" /><path d="M8 2v20h20M2 28l6-6M2 8h20v20M22 8l6-6" fill="none" stroke="#6d7d95" /></svg>
        <span class="caret m8"></span>
        <svg class="m7" width="30" height="30" viewBox="0 0 30 30"><path d="M2 8l6-6h20v20l-6 6H2z" fill="#74849c" stroke="#4e5a6e" /><path d="M2 8h20v20M22 8l6-6" fill="none" stroke="#b8c2d0" /></svg>
        <span class="caret m6"></span>
        <svg class="m6" width="30" height="28" viewBox="0 0 30 28"><path d="M25 9A12 12 0 1 0 27 16" fill="none" stroke="#49556a" stroke-width="2.500" /><path d="M27 3v8h-8" fill="none" stroke="#49556a" stroke-width="2" /></svg>
        <span class="caret m7"></span>
        <svg class="m12" width="30" height="34" viewBox="0 0 30 34"><path d="M1 2h28" stroke="#777" /><rect x="1" y="6" width="28" height="27" fill="#74849c" stroke="#4e5a6e" /><path d="M15 8v24M4 14h8M4 20h8M4 26h8M18 14h8M18 20h8M18 26h8" stroke="#e4e8ee" /></svg>
      </div>
    </div>`;
  }

  private renderStatus() {
    return html`<div class="status">
      <span class="sfirst">X = 6281 Y = 3854</span>
      <span>层高\uFF1A 3.27</span>
      <span>标高\uFF1A -6.2~-2.93</span>
      <span>0</span>
      <span>隐藏\uFF1A 0</span>
      <div class="sbtn sw31"><svg width="18" height="18" viewBox="0 0 18 18"><path d="M2 1v14h15M2 9h5v6" fill="none" stroke="#555" stroke-width="1.500" /></svg></div>
      <div class="sbtn on sw45"><svg width="20" height="24" viewBox="0 0 20 24"><rect x="3" y="5" width="15" height="17" fill="#fff" stroke="#4a9cf0" stroke-width="1.500" /><rect x="1" y="1" width="6" height="6" fill="#f5a54a" /></svg>${caret}</div>
      <div class="sbtn sw31"><svg width="20" height="20" viewBox="0 0 20 20"><path d="M2 1l16 18M18 1L2 19" stroke="#9a9a9a" stroke-width="1.200" /></svg></div>
      <div class="sbtn sw45"><svg width="22" height="18" viewBox="0 0 22 18"><path d="M1 16h19M2 16L14 2M5 10l6 3" fill="none" stroke="#555" stroke-width="1.500" /></svg>${caret}</div>
      <div class="sbtn sw45"><svg width="22" height="18" viewBox="0 0 22 18"><path d="M5 1v8M1 5h8" stroke="#444" stroke-width="1.500" /><rect x="9" y="10" width="12" height="5" fill="#333" /></svg>${caret}</div>
      <div class="sbtn sw92">跨图层选择</div>
      <div class="sbtn sw76">折线选择</div>
      <span>按鼠标左键指定第一个角点\uFF0C或拾取构件图元</span>
      <span class="sfps">27.027 FPS</span>
    </div>`;
  }

  private renderTask() {
    return html`<div class="task">
      <div class="tstart"><svg width="20" height="20" viewBox="0 0 20 20"><path d="M0 3l8.500-1.200v7.700H0zM9.500 1.600L20 0v9.500H9.500zM0 10.500h8.500v7.700L0 17zM9.500 10.500H20V20L9.500 18.400z" fill="#fff" /></svg></div>
      <div class="tsearch">
        <svg width="20" height="22" viewBox="0 0 20 22"><circle cx="12" cy="8" r="6.500" fill="none" stroke="#222" stroke-width="1.500" /><path d="M7 13l-6 7" stroke="#222" stroke-width="1.500" /></svg>
        <span>在这里输入你要搜索的内容</span>
      </div>
      <div class="tcirc"><svg width="20" height="20" viewBox="0 0 20 20"><circle cx="10" cy="10" r="8" fill="none" stroke="#fff" stroke-width="2.500" /></svg></div>
      <div class="tview"><svg width="20" height="20" viewBox="0 0 20 20"><path d="M2 1h8v10H2zM1 15h13M1 18h13M15 1v2M15 7v11" fill="none" stroke="#fff" stroke-width="1.500" /></svg></div>
      <div class="tright">
        <div class="tapps">
          <div class="tapp"><svg width="28" height="30" viewBox="0 0 28 30"><path d="M1 2h11l2 3h13v23H1z" fill="#f7d25a" /><path d="M1 2h11l2 3H1z" fill="#e5a52a" /><rect x="8" y="18" width="12" height="10" fill="#3f9ae8" /><rect x="12" y="23" width="4" height="5" fill="#f7d25a" /></svg></div>
          <div class="tapp"><div class="tbadge b-w">W</div></div>
          <div class="tapp active"><div class="tbadge b-t">T</div></div>
          <div class="tapp"><div class="tbadge b-y">预</div></div>
          <div class="tapp"><div class="tbadge b-e">e</div></div>
        </div>
        <div class="tray">
          <svg width="20" height="20" viewBox="0 0 20 20"><circle cx="10" cy="10" r="9" fill="#fff" /><path d="M10 4a6 6 0 1 0 5 9M10 8a2.500 2.500 0 1 0 3 3" fill="none" stroke="#333" stroke-width="1.500" /></svg>
          <svg width="22" height="14" viewBox="0 0 22 14"><path d="M1 0h10a4 4 0 0 1 4 4v10h-3V4a1 1 0 0 0-1-1H1zM1 5h3v9H1zM6.500 5h3v9h-3zM18 0h3v14h-3z" fill="#fff" /></svg>
          <svg width="18" height="10" viewBox="0 0 18 10"><path d="M1 9l8-8 8 8" fill="none" stroke="#fff" stroke-width="1.500" /></svg>
          <svg width="22" height="14" viewBox="0 0 22 14"><rect x="5" y="3" width="15" height="10" fill="none" stroke="#fff" /><rect x="7" y="5" width="11" height="6" fill="#fff" /><path d="M1 1h4v4H1z" fill="#fff" /></svg>
          <svg width="20" height="16" viewBox="0 0 20 16"><path d="M1 5h4l5-4v14l-5-4H1z" fill="none" stroke="#fff" /><path d="M13 5c1 2 1 4 0 6M16 3c2 3 2 7 0 10" fill="none" stroke="#ccc" /></svg>
          <svg width="20" height="18" viewBox="0 0 20 18"><path d="M2 17A14 14 0 0 1 16 3M6 17A10 10 0 0 1 16 7M10 17a6 6 0 0 1 6-6" fill="none" stroke="#ddd" stroke-width="1.300" /></svg>
          <svg width="20" height="20" viewBox="0 0 20 20"><circle cx="10" cy="10" r="9.500" fill="#8d8d93" /><path d="M6 6l8 8M14 6l-8 8" stroke="#222" stroke-width="2" /></svg>
          <svg width="20" height="20" viewBox="0 0 20 20"><rect width="20" height="20" rx="2" fill="#fff" /><path d="M4 9l4 6 8-12" fill="none" stroke="#222" stroke-width="1.600" /></svg>
          <div class="clock">20:35<br />2020/3/20</div>
          <svg width="20" height="20" viewBox="0 0 20 20"><path d="M0 1h20v15h-7l-3 3-3-3H0z" fill="#fff" /><path d="M4 5h12M4 8h12M4 11h8" stroke="#333" /></svg>
        </div>
      </div>
    </div>`;
  }

  private renderDialog() {
    return html`<div class="dlg">
      <div class="dtitle">报表
        <div class="dctl">
          <svg width="15" height="15" viewBox="0 0 15 15"><path d="M2 12h10" stroke="#fff" stroke-width="2.500" /></svg>
          <svg width="15" height="15" viewBox="0 0 15 15"><path d="M2.500 3.500h10v8h-10z" fill="none" stroke="#fff" stroke-width="1.500" /><path d="M2 3h11" stroke="#fff" stroke-width="3" /></svg>
          <svg width="15" height="15" viewBox="0 0 15 15"><path d="M3 3l9 9M12 3l-9 9" stroke="#fff" stroke-width="2" /></svg>
        </div>
      </div>
      <div class="dbar">
        <div class="tool"><svg width="20" height="20" viewBox="0 0 20 20"><path d="M1 2h17v12H1zM1 6h17M1 10h17M6 2v12M12 2v12" fill="none" stroke="#8a8a8a" /><rect x="4" y="13" width="13" height="6" rx="2" fill="#bcd8f6" stroke="#6aa4e4" /></svg>设置报表范围</div>
        <div class="tool"><svg width="20" height="22" viewBox="0 0 20 22"><path d="M1 1h13v16H1zM1 6h13M1 11h13M6 1v16" fill="#fff" stroke="#8a8a8a" /><circle cx="12" cy="14" r="4" fill="#dbe9f8" stroke="#777" /><path d="M15 17l3 3" stroke="#f59a3e" stroke-width="2" /></svg>报表反查</div>
        <div class="tool cut"><svg width="20" height="22" viewBox="0 0 20 22"><rect x="1" y="3" width="12" height="16" fill="#fff" stroke="#9aa" /><rect x="3" y="6" width="8" height="8" fill="#3fa34d" /><path d="M13 9h3V6l4 4.500-4 4.500v-3h-3z" fill="#f59a3e" /></svg>导出${caret}</div>
        <div class="tool"><svg width="20" height="22" viewBox="0 0 20 22"><path d="M4 1h8l3 3v6H4z" fill="#fff" stroke="#8a8a8a" /><rect x="1" y="10" width="18" height="8" rx="1" fill="#7db4ea" /><rect x="5" y="15" width="10" height="6" fill="#fff" stroke="#8a8a8a" /></svg>打印预览</div>
        <div class="dsearch"><span>搜索报表</span><svg width="13" height="14" viewBox="0 0 13 14"><circle cx="5.500" cy="5.500" r="4" fill="none" stroke="#4aa0d8" stroke-width="2" /><path d="M8.500 9l3 4" stroke="#4aa0d8" stroke-width="2" /></svg></div>
        <div class="tool dprop">项目特征添加位置${caret}</div>
      </div>
      <div class="dbody">
        <div class="dleft">
          <div class="tabs"><div class="tab">钢筋报表量</div><div class="tab on">土建报表量</div></div>
          <div class="tree"><div class="tree-rows">
            ${reportTree.map((r) =>
              r.group
                ? html`<div class="trow group"><span class="tri"></span>${r.t}</div>`
                : html`<div class="trow"><div class="titem ${r.sel ? "sel" : ""}">${docIcon}${r.t}</div></div>`
            )}
          </div></div>
        </div>
        <div class="dright">
          <div class="nbar">
            <div class="npg"><svg viewBox="0 0 18 22"><path d="M2 2v18M16 2L6 11l10 9" fill="none" stroke="currentColor" stroke-width="1.300" /></svg></div>
            <div class="npg two"><svg viewBox="0 0 18 22"><path d="M10 2L1 11l9 9M17 2L8 11l9 9" fill="none" stroke="currentColor" stroke-width="1.300" /></svg></div>
            <div class="ninput">2</div>
            <div class="npg three"><svg viewBox="0 0 18 22"><path d="M1 2l9 9-9 9M8 2l9 9-9 9" fill="none" stroke="currentColor" stroke-width="1.300" /></svg></div>
            <div class="npg four"><svg viewBox="0 0 18 22"><path d="M2 2l10 9-10 9M16 2v18" fill="none" stroke="currentColor" stroke-width="1.300" /></svg></div>
            <div class="ncombo nc1">全部项目${caret}</div>
            <div class="ncombo nc2">按清单编码排序${caret}</div>
            <div class="ncombo nc3">全部折叠${caret}</div>
            <div class="nplain np1"><svg width="21" height="16" viewBox="0 0 21 16"><rect width="21" height="16" rx="2" fill="#3d8ee0" /><text x="10.500" y="13" text-anchor="middle" font-size="12" font-family="Liberation Sans" fill="#fff">¥</text></svg>显示费用项</div>
            <div class="nplain np2"><svg width="21" height="22" viewBox="0 0 21 22"><path d="M10.500 1l9 5-9 5-9-5zM1.500 10l9 5 9-5M1.500 14l9 5 9-5" fill="none" stroke="#5aa2ee" stroke-width="1.500" /></svg>分部整理</div>
          </div>
          <div class="gridwrap">
            ${this.renderTable()}
            <div class="dscroll"></div>
          </div>
        </div>
      </div>
      <div class="dfoot"><svg width="12" height="12" viewBox="0 0 12 12"><path d="M9 1h2v2H9zM6 4h2v2H6zM9 4h2v2H9zM3 7h2v2H3zM6 7h2v2H6zM9 7h2v2H9zM1 10h2v2H1zM4 10h2v2H4zM7 10h2v2H7zM10 10h2v2h-2z" fill="#8c8c8c" /></svg></div>
    </div>`;
  }

  private renderTable() {
    return html`<table>
      <colgroup><col style="width:35px" /><col style="width:108px" /><col style="width:155px" /><col style="width:241px" /><col style="width:69px" /><col style="width:106px" /></colgroup>
      <tr>
        <th class="rn-h"><div></div><div></div></th>
        <th>序号</th><th>编码</th><th>项目名称</th><th>单位</th><th>工程量</th>
      </tr>
      ${rows.map((r, i) => {
        const first = r.sel && !rows[i - 1]?.sel;
        const last = r.sel && !rows[i + 1]?.sel;
        return html`<tr class="${r.sel ? "sel" : ""} ${first ? "first" : ""} ${last ? "last" : ""}" style="height:${r.h}px">
          <td class="rn">${r.id}</td>
          <td><div class="seq"><span class="box ${r.seq ? "" : "sub"}">${r.sign === "-" ? "−" : "+"}</span><b>${r.seq ?? ""}</b></div></td>
          <td class="code">${r.code}</td>
          <td class="nm">${r.name}</td>
          <td class="unit">m3</td>
          <td class="qty">${r.qty}</td>
        </tr>`;
      })}
    </table>`;
  }

  render() {
    return html`
      ${this.renderRibbon()}
      <div class="band">
        <div class="combo combo-a">地下二层${caret}</div>
        <div class="combo combo-b">柱</div>
      </div>
      <div class="work">${this.renderSide()}${this.renderProps()}${this.renderCanvas()}</div>
      ${this.renderStatus()} ${this.renderTask()} ${this.renderDialog()}
    `;
  }
}
